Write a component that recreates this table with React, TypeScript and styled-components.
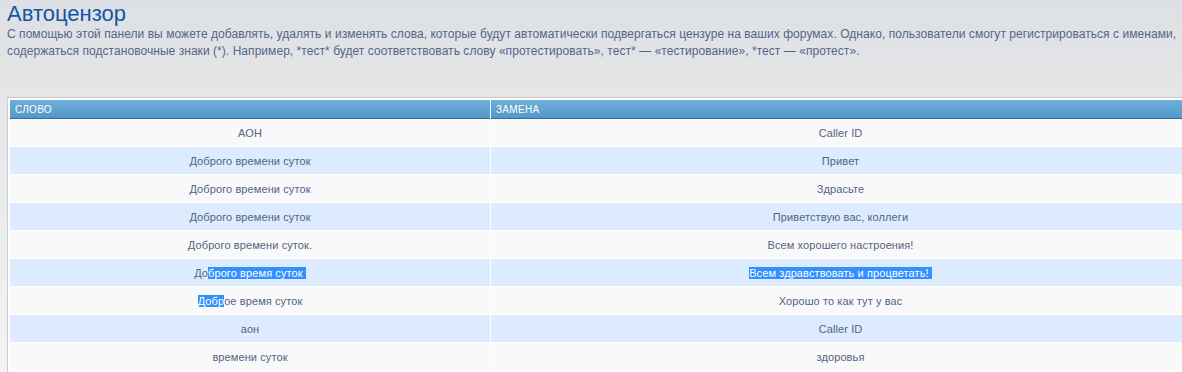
import styled, { createGlobalStyle } from "styled-components";

const GlobalStyle = createGlobalStyle`
  html, body {
    margin: 0;
    padding: 0;
    overflow: hidden;
  }
  body {
    background: linear-gradient(#dde0e4 0px, #e6e7e8 120px, #f3f3f3 372px);
    min-height: 372px;
    font-family: "Liberation Sans", Arial, sans-serif;
  }
`;

const Page = styled.div`
  width: 1400px;
  padding-left: 7px;
`;

const Title = styled.h1`
  margin: 0;
  padding-top: 2px;
  font-family: "Liberation Sans", Arial, sans-serif;
  font-size: 22px;
  font-weight: normal;
  line-height: 24px;
  color: #1655a5;
`;

const Intro = styled.p`
  margin: 0 0 37px;
  font-size: 12px;
  line-height: 17px;
  letter-spacing: 0.05px;
  color: #56648a;
  white-space: nowrap;
`;

const Panel = styled.div`
  width: 1180px;
  padding: 2px;
  background: #ffffff;
  border: 1px solid #cccccc;
`;

const Table = styled.div`
  display: grid;
  grid-template-columns: 480px 699px;
  column-gap: 1px;
  background: #ffffff;
`;

const HeadCell = styled.div`
  height: 18px;
  padding-left: 5px;
  display: flex;
  align-items: center;
  background: linear-gradient(#6eaed9, #5598c8);
  border-bottom: 1px solid #2f6e9f;
  color: #ffffff;
  font-size: 10px;
  text-transform: uppercase;
  letter-spacing: 0.3px;
`;

const Row = styled.div<{ $alt: boolean }>`
  display: contents;
  & > div {
    background: ${(p) => (p.$alt ? "#dcebfe" : "#f9f9f9")};
  }
`;

const Cell = styled.div`
  height: 27px;
  margin-bottom: 1px;
  display: flex;
  align-items: center;
  justify-content: center;
  font-size: 11px;
  letter-spacing: 0.1px;
  color: #536482;
  white-space: pre;
`;

const Selected = styled.span`
  background: #3390ff;
  color: #ffffff;
`;

const getRows = () => [
  { word: "АОН", replacement: "Caller ID" },
  { word: "Доброго времени суток", replacement: "Привет" },
  { word: "Доброго времени суток", replacement: "Здрасьте" },
  { word: "Доброго времени суток", replacement: "Приветствую вас, коллеги" },
  { word: "Доброго времени суток.", replacement: "Всем хорошего настроения!" },
  {
    word: (
      <span>
        До<Selected>брого время суток{"\u00a0"}</Selected>
      </span>
    ),
    replacement: <Selected>Всем здравствовать и процветать!{"\u00a0"}</Selected>,
  },
  {
    word: (
      <span>
        <Selected>Добр</Selected>ое время суток
      </span>
    ),
    replacement: "Хорошо то как тут у вас",
  },
  { word: "аон", replacement: "Caller ID" },
  { word: "времени суток", replacement: "здоровья" },
];

const App = () => {
  const rows = getRows();
  return (
    <>
      <GlobalStyle />
      <Page>
        <Title>Автоцензор</Title>
        <Intro>
          С помощью этой панели вы можете добавлять, удалять и изменять слова, которые будут автоматически
          подвергаться цензуре на ваших форумах. Однако, пользователи смогут регистрироваться с именами,
          <br />
          содержаться подстановочные знаки (*). Например, *тест* будет соответствовать слову «протестировать»,
          тест* — «тестирование», *тест — «протест».
        </Intro>
        <Panel>
          <Table>
            <HeadCell>Слово</HeadCell>
            <HeadCell>Замена</HeadCell>
            {rows.map((row, i) => (
              <Row key={i} $alt={i % 2 === 1}>
                <Cell>{row.word}</Cell>
                <Cell>{row.replacement}</Cell>
              </Row>
            ))}
          </Table>
        </Panel>
      </Page>
    </>
  );
};

export default App;
